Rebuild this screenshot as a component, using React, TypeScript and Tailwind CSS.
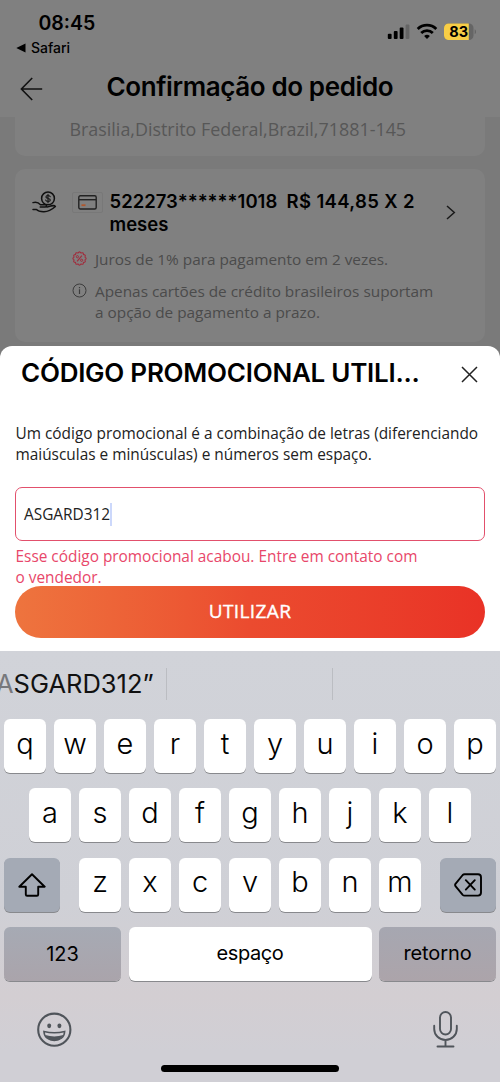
import React from 'react';
import { clsx } from 'clsx';

const letterRows = [
  ['q', 'w', 'e', 'r', 't', 'y', 'u', 'i', 'o', 'p'],
  ['a', 's', 'd', 'f', 'g', 'h', 'j', 'k', 'l'],
  ['z', 'x', 'c', 'v', 'b', 'n', 'm'],
];

const inter = "font-['Inter',sans-serif]";
const openSans = "font-['Open_Sans',sans-serif]";

// Scalloped outline of the interest badge
const badgePoints = Array.from({ length: 96 }, (_, i) => {
  const angle = (i / 96) * Math.PI * 2;
  const radius = 6.15 + 0.45 * Math.cos(angle * 12);
  return `${(7.5 + radius * Math.cos(angle)).toFixed(2)},${(7.5 + radius * Math.sin(angle)).toFixed(2)}`;
}).join(' ');

const Key: React.FC<{ className?: string; children: React.ReactNode; label?: string }> = ({ className, children, label }) => (
  <button
    aria-label={label}
    className={clsx(
      'flex h-[54px] shrink-0 items-center justify-center rounded-[6px] text-black shadow-[0_1px_0_#88898d]',
      className
    )}
  >
    {children}
  </button>
);

const LetterKey: React.FC<{ letter: string }> = ({ letter }) => (
  <Key className="w-[42px] bg-white pb-[5px] text-[29px] leading-[36px] font-[365]">{letter}</Key>
);

const StatusIcons = () => (
  <svg width="90" height="20" viewBox="386 22 90 20" className="block">
    <rect x="387.8" y="33.8" width="3.8" height="5.2" rx="1" />
    <rect x="393.8" y="31" width="3.8" height="8" rx="1" />
    <rect x="399.7" y="27.6" width="3.8" height="11.4" rx="1" />
    <rect x="405.6" y="24.5" width="3.8" height="14.5" rx="1" fill="#656565" />
    <g fill="none" stroke="#000" strokeWidth="2.8">
      <path d="M417.7 28.9 a13.3 13.3 0 0 1 18.6 0" />
      <path d="M421.2 33 a8.4 8.4 0 0 1 11.6 0" />
    </g>
    <path d="M427 39 l-2.9 -3 a4.3 4.3 0 0 1 5.8 0 Z" />
    <rect x="444" y="23.4" width="29.5" height="16.6" rx="4.5" fill="#656565" />
    <path d="M448.5 23.4 h20.3 v16.6 h-20.3 a4.5 4.5 0 0 1 -4.5 -4.5 v-7.6 a4.5 4.5 0 0 1 4.5 -4.5 Z" fill="#f8ce46" />
    <path d="M474.7 29.2 q1.4 .8 1.4 2.5 t-1.4 2.5 Z" fill="#656565" />
    <text x="458.6" y="37" textAnchor="middle" fontSize="14.5" fontWeight="700" fontFamily="Inter, sans-serif">83</text>
  </svg>
);

const Header = () => (
  <header className={clsx(inter, 'h-[117px] shrink-0 bg-[#808080] text-black')}>
    <div className="flex h-[70px] justify-between">
      <div className="pt-[11px]">
        <div className="pl-[38.5px] text-[19.5px] leading-[24px] font-semibold">08:45</div>
        <div className="mt-[3px] flex items-center gap-[5px] pl-4 text-[14px] leading-[20px] font-medium">
          <svg width="10" height="10" viewBox="0 0 10 10">
            <path d="M.3 5 L9.5 .6 V9.4 Z" />
          </svg>
          Safari
        </div>
      </div>
      <div className="pt-[22px] pr-6">
        <StatusIcons />
      </div>
    </div>
    <div className="flex h-[34px] items-center">
      <svg width="24" height="24" viewBox="0 0 24 24" fill="none" stroke="#111" strokeWidth="1.6" className="mt-[3px] ml-5">
        <path d="M22.2 12 H1.4 M12.2 1 L1.4 12 L12.2 23" />
      </svg>
      <h1 className="ml-[62.5px] whitespace-nowrap text-[26px] leading-[34px] font-semibold tracking-[-0.39px]">Confirmação do pedido</h1>
    </div>
  </header>
);

const PaymentCard = () => (
  <div className="mx-[15px] mt-[13px] flex h-[173px] rounded-[10px] bg-[#808080]">
    <svg width="25" height="22" viewBox="0 0 25 22" fill="none" stroke="#111" strokeWidth="1.5" strokeLinecap="round" strokeLinejoin="round" className="mt-[22px] ml-[17px] shrink-0">
      <circle cx="16" cy="7.4" r="6.4" />
      <path d="M18.2 5.7 c-.3-.9-1.1-1.2-2.2-1.2 c-1.3 0-2.1.6-2.1 1.4 c0 2.1 4.4 1 4.4 3.1 c0 1-.9 1.4-2.2 1.4 c-1.3 0-2.1-.4-2.4-1.3 M16 3.2 v8.6" strokeWidth="1.1" />
      <path d="M1 11.6 C4.5 10.5 7 12 8.5 13.7 H13.2 C15 13.7 15.2 15.8 13.2 15.9 H8.2 M1 18.6 H4.5 C6.5 20.8 8.5 20.7 12 20.7 C16 20.7 19.5 19 23.4 15.5 C22.5 13.8 20 14.5 15 16.1" />
    </svg>
    <div className="ml-[15px] w-[345px] shrink-0 pt-[21px]">
      <div className="flex">
        <div className="mt-[2px] flex h-[21px] w-[31px] shrink-0 items-center justify-center rounded-[2px] border border-[#787878]">
          <svg width="19" height="15" viewBox="0 0 19 15" fill="none" stroke="#222" strokeWidth="1.4">
            <rect x=".8" y=".8" width="17.4" height="13.2" rx="1.5" />
            <path d="M1 4.7 H18" />
            <path d="M3.5 10.2 H7.5" stroke="#b0572c" strokeWidth="1.8" />
          </svg>
        </div>
        <p className={clsx(inter, 'ml-[6.5px] whitespace-pre text-[18.5px] leading-[23px] font-semibold text-black')}>
          {'522273******1018  '}
          <span className="tracking-[0.35px]">R$ 144,85 X 2</span>
          {'\nmeses'}
        </p>
      </div>
      <div className={clsx(openSans, 'mt-[13px] flex text-[15.35px] leading-[21px] text-[#4b4b4b]')}>
        <svg width="15" height="15" viewBox="0 0 15 15" fill="none" stroke="#a02c3c" className="mt-[2px] shrink-0">
          <polygon points={badgePoints} strokeWidth="1.1" />
          <path d="M9.9 4.7 L5.1 10.3" strokeWidth="1.2" />
          <circle cx="5.4" cy="5.7" r="1.1" />
          <circle cx="9.6" cy="9.3" r="1.1" />
        </svg>
        <span className="ml-[8px] whitespace-nowrap">Juros de 1% para pagamento em 2 vezes.</span>
      </div>
      <div className={clsx(openSans, 'mt-[11px] flex text-[15.35px] leading-[21px] text-[#4b4b4b]')}>
        <svg width="15" height="15" viewBox="0 0 15 15" fill="none" stroke="#3c3c3c" className="mt-[2px] shrink-0">
          <circle cx="7.5" cy="7.5" r="6.5" />
          <path d="M7.5 6.3 V11 M7.5 4 V5.2" strokeWidth="1.2" />
        </svg>
        <span className="ml-[8px] whitespace-nowrap">
          Apenas cartões de crédito brasileiros suportam
          <br />a opção de pagamento a prazo.
        </span>
      </div>
    </div>
    <svg width="10" height="15" viewBox="0 0 10 15" fill="none" stroke="#1a1a1a" strokeWidth="1.5" className="mt-[36px] ml-[29px]">
      <path d="M1 1 L8.3 7.5 L1 14" />
    </svg>
  </div>
);

const PromoSheet = () => (
  <section className="h-[305px] shrink-0 rounded-t-[12px] bg-white">
    <div className="flex h-[72px] items-start justify-between pr-[22px] pl-[21px]">
      <h2 className={clsx(inter, 'mt-[10px] whitespace-nowrap text-[26px] leading-[34px] font-semibold tracking-[-0.25px] text-black')}>
        CÓDIGO PROMOCIONAL UTILI...
      </h2>
      <svg width="17" height="17" viewBox="0 0 17 17" stroke="#222" strokeWidth="1.5" className="mt-5">
        <path d="M1 1 L16 16 M16 1 L1 16" />
      </svg>
    </div>
    <div className={clsx(openSans, 'flex flex-col px-[15px] pt-[5px] text-[15.4px] leading-[21px] text-[#222]')}>
      <p className="pl-[0.5px] whitespace-nowrap">
        Um código promocional é a combinação de letras (diferenciando
        <br />
        maiúsculas e minúsculas) e números sem espaço.
      </p>
      <div className="mt-[22px] flex h-[54px] items-center rounded-[7px] border-[1.5px] border-[#e2506c] pl-2">
        <span>ASGARD312</span>
        <span className="h-[23px] w-[2px] bg-[#ccd8fb]" />
      </div>
      <p className="mt-[5px] pl-[0.5px] whitespace-nowrap text-[#e8476a]">
        Esse código promocional acabou. Entre em contato com
        <br />o vendedor.
      </p>
      <button className="mt-[-2px] h-[52px] rounded-full bg-linear-to-r from-[#ee743e] via-[#eb4b2f] to-[#e93226] pb-px text-[19px] tracking-[0.4px] text-white [-webkit-text-stroke:0.4px_white]">
        UTILIZAR
      </button>
    </div>
  </section>
);

const Keyboard = () => (
  <section className={clsx(inter, 'flex h-[431px] shrink-0 flex-col bg-[linear-gradient(180deg,#d1d3d9_0%,#cfd0d6_58%,#d3ced2_80%,#d0cfd5_93%)]')}>
    <div className="flex h-[68px] items-start pt-[17px]">
      <div className="h-8 w-[167px] border-r border-[#bbbdc2]">
        <span className="-ml-[4px] block whitespace-nowrap text-[25.5px] leading-[32px] text-[#111]">
          <span className="text-[#77787c]">A</span>SGARD312”
        </span>
      </div>
      <div className="h-8 w-[166px] border-r border-[#bbbdc2]" />
    </div>
    <div className="flex flex-col gap-[15.4px]">
      <div className="flex justify-between px-1">
        {letterRows[0].map((letter) => <LetterKey key={letter} letter={letter} />)}
      </div>
      <div className="flex justify-between px-[29px]">
        {letterRows[1].map((letter) => <LetterKey key={letter} letter={letter} />)}
      </div>
      <div className="flex justify-between px-1">
        <Key label="shift" className="w-14 bg-[#a4aab5]">
          <svg width="28" height="24" viewBox="0 0 28 24" fill="none" stroke="#000" strokeWidth="1.9" strokeLinejoin="round">
            <path d="M14 1.2 L26.7 13.7 H20.2 V21.5 Q20.2 22.8 18.9 22.8 H9.1 Q7.8 22.8 7.8 21.5 V13.7 H1.3 Z" />
          </svg>
        </Key>
        <div className="flex gap-2">
          {letterRows[2].map((letter) => <LetterKey key={letter} letter={letter} />)}
        </div>
        <Key label="apagar" className="w-14 bg-[#a4aab5]">
          <svg width="28" height="24" viewBox="0 0 28 24" fill="none" stroke="#000" strokeWidth="1.9" strokeLinecap="round" strokeLinejoin="round">
            <path d="M10.5 1.2 H24 Q27 1.2 27 4.2 V19.6 Q27 22.6 24 22.6 H10.5 Q9.5 22.6 8.7 21.8 L1.5 13.2 Q.7 12 1.5 10.8 L8.7 2 Q9.5 1.2 10.5 1.2 Z" />
            <path d="M11.8 7.2 L20.8 16.6 M20.8 7.2 L11.8 16.6" />
          </svg>
        </Key>
      </div>
      <div className="flex justify-between px-1 text-[20px]">
        <Key className="w-[117px] bg-linear-to-b from-[#a6aab4] to-[#aaa4ab]">123</Key>
        <Key className="w-[243px] bg-white pb-[2px] tracking-[-0.4px]">espaço</Key>
        <Key className="w-[117px] bg-linear-to-b from-[#a6a7b1] to-[#aca4aa] pb-[2px] tracking-[-0.1px]">retorno</Key>
      </div>
    </div>
    <div className="flex justify-between px-[37px] pt-[30px]">
      <svg width="35" height="36" viewBox="0 0 35 36" fill="none" stroke="#50555b" strokeWidth="2.1" className="mt-px">
        <circle cx="17.3" cy="17.7" r="16.1" />
        <ellipse cx="12.2" cy="13.8" rx="2" ry="2.4" fill="#50555b" stroke="none" />
        <ellipse cx="22.4" cy="13.8" rx="2" ry="2.4" fill="#50555b" stroke="none" />
        <path d="M6.9 19.4 Q17.3 22 27.7 19.4 C27.3 25.5 22.7 28.5 17.3 28.5 S7.3 25.5 6.9 19.4 Z" strokeWidth="1.5" />
        <path d="M8.2 23 Q17.3 25.8 26.4 23 C24.8 27 21.5 28.6 17.3 28.6 S9.8 27 8.2 23 Z" fill="#50555b" stroke="none" />
      </svg>
      <svg width="25" height="38" viewBox="0 0 25 38" fill="none" stroke="#50555b" strokeWidth="1.9" strokeLinecap="round" className="mr-[5px]">
        <rect x="7" y="1" width="11" height="22.5" rx="5.5" />
        <path d="M1.2 14.8 V18 a11.3 11 0 0 0 22.6 0 V14.8 M12.5 29 V35.4 M4.5 35.5 H20.5" />
      </svg>
    </div>
    <div className="mx-auto mt-[16px] h-[7px] w-[178px] shrink-0 rounded-full bg-black" />
  </section>
);

const App: React.FC = () => {
  return (
    <main className="flex h-[1082px] w-[500px] flex-col overflow-hidden bg-[#7a7a7a]">
      <Header />
      <div className="h-[229px] shrink-0">
        <div className={clsx(openSans, 'mx-[15px] h-[39px] rounded-b-[10px] bg-[#808080] pl-[54.5px] text-[17.9px] leading-[24px] whitespace-nowrap text-[#575757]')}>
          Brasilia,Distrito Federal,Brazil,71881-145
        </div>
        <PaymentCard />
      </div>
      <PromoSheet />
      <Keyboard />
    </main>
  );
};

export default App;
